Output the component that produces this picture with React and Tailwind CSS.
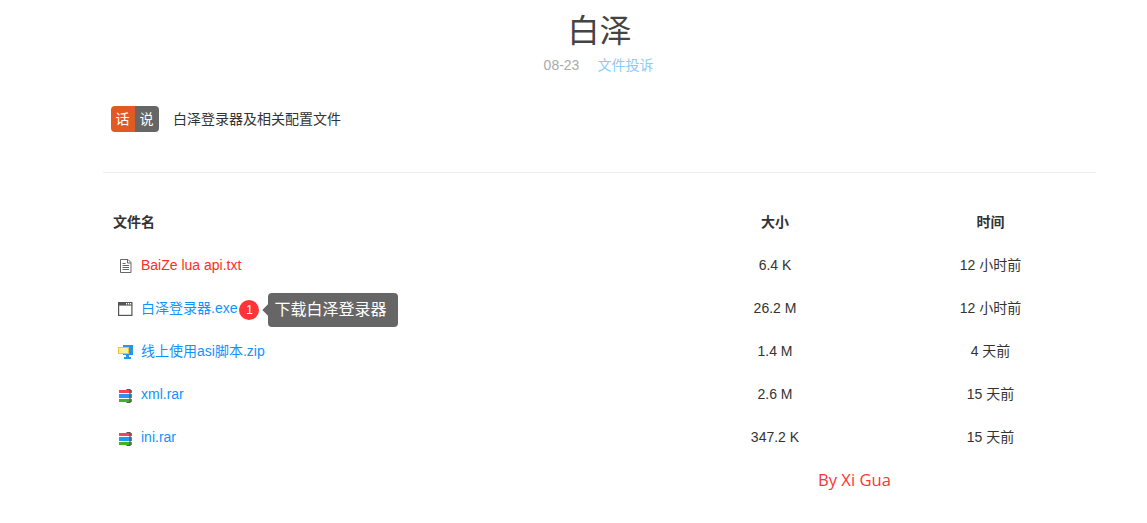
import React from 'react';

const FONT = "font-['Liberation_Sans','Noto_Sans_CJK_SC',sans-serif]";

const TxtIcon = () => (
  <svg className="mt-px overflow-visible" width="16" height="16" viewBox="0 0 16 16" fill="none" stroke="#666" strokeWidth="1">
    <path d="M3.5 2.5h7.5l3 3v10H3.5z" />
    <path d="M10.5 2.5v3.5h3.5" />
    <path d="M5.5 6.5h3M5.5 8.5h6.5M5.5 10.5h6.5M5.5 12.5h6.5" />
  </svg>
);

const ExeIcon = () => (
  <svg className="mt-px overflow-visible" width="16" height="16" viewBox="0 0 16 16" fill="none">
    <rect x="1" y="2" width="14.5" height="14" fill="#555" />
    <rect x="2.2" y="5.6" width="12.1" height="9.2" fill="#fff" />
    <path d="M9 3.8h1.2M11 3.8h1.2M13 3.8h1.2" stroke="#fff" strokeWidth="1.6" />
  </svg>
);

const ZipIcon = () => (
  <svg className="mt-px overflow-visible" width="16" height="16" viewBox="0 0 16 16" fill="none">
    <path d="M6 2h10v10H6z" fill="#2196f3" />
    <path d="M9 12h3v2h2v2H7v-2h2z" fill="#2196f3" />
    <rect x="1.5" y="4.5" width="10" height="6" fill="#fdf0a0" stroke="#fbc02d" />
  </svg>
);

const RarIcon = () => (
  <svg className="mt-px overflow-visible" width="16" height="16" viewBox="0 0 16 16" fill="none">
    <rect x="2" y="4" width="13" height="3" fill="#f44352" />
    <rect x="2" y="8" width="13" height="4" fill="#2196f3" />
    <rect x="2" y="13" width="13" height="3" fill="#43b02a" />
    <path d="M9.5 3.5h3.5v13h-3.5" stroke="#555" strokeWidth="1.2" />
  </svg>
);

const files = [
  { name: 'BaiZe lua api.txt', size: '6.4 K', time: '12 小时前', icon: <TxtIcon />, color: 'text-[#ff2d20]' },
  { name: '白泽登录器.exe', size: '26.2 M', time: '12 小时前', icon: <ExeIcon />, color: 'text-[#0f93ff]', tip: '下载白泽登录器' },
  { name: '线上使用asi脚本.zip', size: '1.4 M', time: '4 天前', icon: <ZipIcon />, color: 'text-[#0f93ff]' },
  { name: 'xml.rar', size: '2.6 M', time: '15 天前', icon: <RarIcon />, color: 'text-[#0f93ff]' },
  { name: 'ini.rar', size: '347.2 K', time: '15 天前', icon: <RarIcon />, color: 'text-[#0f93ff]' },
];

export default function App() {
  return (
    <div className={`${FONT} h-[523px] w-[1147px] overflow-hidden bg-white text-[#333]`}>
      <div className="ml-[103px] w-[993px]">
        {/* Title */}
        <h1 className="pt-[10px] text-center text-[32px] leading-[42px] font-normal text-[#444]">白泽</h1>
        <div className="mt-[3px] flex justify-center gap-[18px] pr-[2px] text-sm leading-5">
          <span className="text-[#aaa]">08-23</span>
          <span className="text-[#8ccbf7]">文件投诉</span>
        </div>

        {/* Description */}
        <div className="mt-[31px] flex items-center pl-2">
          <div className="flex h-[26px] overflow-hidden rounded text-sm leading-[26px] text-white">
            <span className="w-6 bg-[#e05a22] pr-px text-center">话</span>
            <span className="w-6 bg-[#666] pr-px text-center">说</span>
          </div>
          <span className="ml-[14px] text-sm text-[#333]">白泽登录器及相关配置文件</span>
        </div>

        <div className="mt-[40px] border-t border-[#eee]" />

        {/* File table */}
        <div className="mt-[27px] text-sm">
          <div className="flex h-[43px] items-center font-bold">
            <div className="w-[562px] pl-2.5">文件名</div>
            <div className="w-[220px] text-center">大小</div>
            <div className="w-[211px] text-center">时间</div>
          </div>
          {files.map((f) => (
            <div key={f.name} className="flex h-[43px] items-center">
              <div className="flex w-[562px] items-center pl-[14px]">
                {f.icon}
                <span className={`ml-[8px] ${f.color}`}>{f.name}</span>
                {f.tip && (
                  <span className="relative mt-[5px] ml-[2px] flex h-5 w-5 items-center justify-center rounded-full bg-[#ff3338] text-xs text-white">
                    1
                    <span className="absolute top-[-7px] left-[29px] h-[34px] w-[130px] rounded bg-[#666] pl-[6px] text-base leading-[34px] whitespace-nowrap text-white">
                      {f.tip}
                      <span className="absolute top-[13px] left-[-4px] h-2 w-2 rotate-45 bg-[#666]" />
                    </span>
                  </span>
                )}
              </div>
              <div className="w-[220px] text-center">{f.size}</div>
              <div className="w-[211px] text-center">{f.time}</div>
            </div>
          ))}
          <div className="mt-[10px] ml-[715px] font-['Open_Sans',sans-serif] text-[16.6px] leading-6 text-[#ff3338]">By Xi Gua</div>
        </div>
      </div>
    </div>
  );
}
